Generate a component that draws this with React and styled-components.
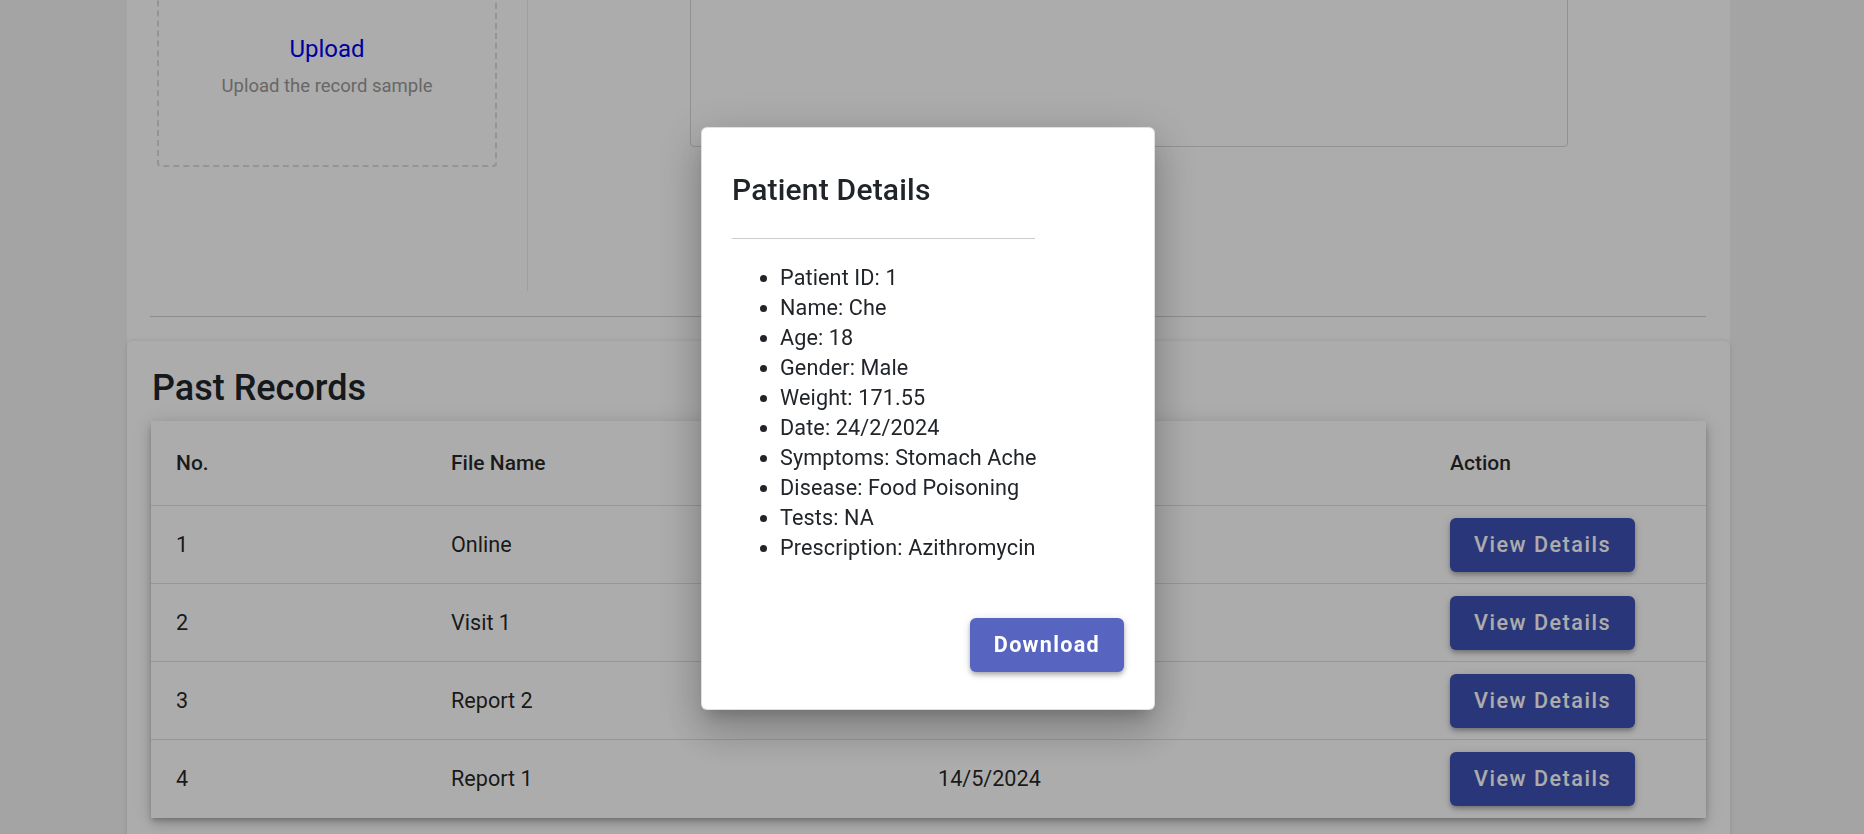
import React from "react";
import styled, { createGlobalStyle } from "styled-components";

const GlobalStyle = createGlobalStyle`
  html, body {
    margin: 0;
    padding: 0;
    background: #f3f3f3;
    font-family: Roboto, "Liberation Sans", Arial, sans-serif;
    overflow: hidden;
  }
`;

const Page = styled.div`
  margin: -73px 134px 0 127px;
  background: #ffffff;
  min-height: 980px;
`;

const UploadSection = styled.section`
  display: flex;
  height: 364px;
  padding: 20px 0 0 30px;
  box-sizing: border-box;
`;

const DropBox = styled.div`
  width: 340px;
  height: 220px;
  box-sizing: border-box;
  border: 2px dashed #d9dce1;
  border-radius: 4px;
  padding-top: 82px;
  display: flex;
  flex-direction: column;
  align-items: center;
`;

const UploadLink = styled.a`
  color: #0000ee;
  font-size: 24px;
  line-height: 36px;
  text-decoration: none;
`;

const UploadHint = styled.span`
  margin-top: 6px;
  color: #999999;
  font-size: 18.5px;
  line-height: 26px;
`;

const VDivider = styled.div`
  width: 1px;
  margin-left: 30px;
  background: #ececec;
  align-self: stretch;
`;

const PreviewArea = styled.div`
  flex: 1;
  display: flex;
  justify-content: center;
`;

const PreviewBox = styled.div`
  width: 878px;
  height: 200px;
  box-sizing: border-box;
  border: 1px solid #d8d8d8;
  border-radius: 4px;
`;

const HRule = styled.hr`
  margin: 25px 24px 0 23px;
  border: none;
  border-top: 1px solid #d2d2d2;
`;

const Card = styled.div`
  margin-top: 24px;
  background: #ffffff;
  border-radius: 6px;
  box-shadow: 0 -1px 4px rgba(0, 0, 0, 0.06), 0 2px 6px rgba(0, 0, 0, 0.08);
  padding: 26px 24px 24px 24px;
`;

const CardTitle = styled.h2`
  margin: 0 0 11px 1px;
  font-size: 36px;
  line-height: 43px;
  font-weight: 500;
  color: #212529;
`;

const TablePaper = styled.div`
  background: #ffffff;
  box-shadow: 0px 3px 5px -1px rgba(0, 0, 0, 0.2), 0px 6px 10px 0px rgba(0, 0, 0, 0.14),
    0px 1px 18px 0px rgba(0, 0, 0, 0.12);
`;

const Table = styled.table`
  width: 100%;
  border-collapse: collapse;
  table-layout: fixed;
`;

const HeadCell = styled.th`
  height: 84px;
  padding: 0 0 0 25px;
  text-align: left;
  font-size: 21px;
  font-weight: 500;
  color: rgba(0, 0, 0, 0.85);
  border-bottom: 1px solid #e0e0e0;
`;

const Row = styled.tr`
  height: 78px;
  border-bottom: ${(p) => (p.$last ? "none" : "1px solid #e0e0e0")};
`;

const Cell = styled.td`
  padding: 0 0 0 25px;
  font-size: 21.6px;
  font-weight: 400;
  color: rgba(0, 0, 0, 0.87);
`;

const Button = styled.button`
  height: 54px;
  padding: 0 24px;
  border: none;
  border-radius: 6px;
  background: ${(p) => (p.$light ? "#5865c0" : "#3f51b5")};
  color: #ffffff;
  font-family: Roboto, "Liberation Sans", Arial, sans-serif;
  font-size: 21.6px;
  font-weight: ${(p) => (p.$light ? 700 : 500)};
  letter-spacing: ${(p) => (p.$light ? "1.3px" : "1.5px")};
  cursor: pointer;
  box-shadow: 0px 2px 4px -1px rgba(0, 0, 0, 0.2), 0px 4px 5px 0px rgba(0, 0, 0, 0.14),
    0px 1px 10px 0px rgba(0, 0, 0, 0.12);
`;

const Backdrop = styled.div`
  position: fixed;
  inset: 0;
  background: rgba(0, 0, 0, 0.325);
  display: flex;
  align-items: center;
  justify-content: center;
`;

const Dialog = styled.div`
  width: 454px;
  height: 583px;
  box-sizing: border-box;
  margin: 2px 8px 0 0;
  padding: 32px 30px 37px 30px;
  background: #ffffff;
  border: 1px solid rgba(0, 0, 0, 0.12);
  border-radius: 6px;
  display: flex;
  flex-direction: column;
  box-shadow: 0px 11px 15px -7px rgba(0, 0, 0, 0.2), 0px 24px 38px 3px rgba(0, 0, 0, 0.14),
    0px 9px 46px 8px rgba(0, 0, 0, 0.12);
`;

const DialogTitle = styled.h3`
  margin: 12px 0 0 0;
  font-size: 30px;
  line-height: 36px;
  font-weight: 500;
  letter-spacing: 0.2px;
  color: #212529;
`;

const DialogRule = styled.hr`
  width: 303px;
  margin: 30px 0 0 0;
  border: none;
  border-top: 1px solid #cccccc;
`;

const DetailList = styled.ul`
  margin: 24px 0 0 0;
  padding-left: 48px;
  font-size: 21.6px;
  line-height: 30px;
  letter-spacing: 0.12px;
  color: #212529;
`;

const DialogActions = styled.div`
  margin-top: auto;
  display: flex;
  justify-content: flex-end;
`;

const records = [
  { no: 1, name: "Online", date: "24/2/2024" },
  { no: 2, name: "Visit 1", date: "2/3/2024" },
  { no: 3, name: "Report 2", date: "30/4/2024" },
  { no: 4, name: "Report 1", date: "14/5/2024" },
];

const details = [
  "Patient ID: 1",
  "Name: Che",
  "Age: 18",
  "Gender: Male",
  "Weight: 171.55",
  "Date: 24/2/2024",
  "Symptoms: Stomach Ache",
  "Disease: Food Poisoning",
  "Tests: NA",
  "Prescription: Azithromycin",
];

const App = () => {
  return (
    <>
      <GlobalStyle />
      <Page>
        <UploadSection>
          <DropBox>
            <UploadLink href="#">Upload</UploadLink>
            <UploadHint>Upload the record sample</UploadHint>
          </DropBox>
          <VDivider />
          <PreviewArea>
            <PreviewBox />
          </PreviewArea>
        </UploadSection>
        <HRule />
        <Card>
          <CardTitle>Past Records</CardTitle>
          <TablePaper>
            <Table>
              <colgroup>
                <col style={{ width: 275 }} />
                <col style={{ width: 487 }} />
                <col style={{ width: 512 }} />
                <col style={{ width: 281 }} />
              </colgroup>
              <thead>
                <tr>
                  <HeadCell>No.</HeadCell>
                  <HeadCell>File Name</HeadCell>
                  <HeadCell>Date</HeadCell>
                  <HeadCell>Action</HeadCell>
                </tr>
              </thead>
              <tbody>
                {records.map((r, i) => (
                  <Row key={r.no} $last={i === records.length - 1}>
                    <Cell>{r.no}</Cell>
                    <Cell>{r.name}</Cell>
                    <Cell>{r.date}</Cell>
                    <Cell>
                      <Button>View Details</Button>
                    </Cell>
                  </Row>
                ))}
              </tbody>
            </Table>
          </TablePaper>
        </Card>
      </Page>
      <Backdrop>
        <Dialog>
          <DialogTitle>Patient Details</DialogTitle>
          <DialogRule />
          <DetailList>
            {details.map((d) => (
              <li key={d}>{d}</li>
            ))}
          </DetailList>
          <DialogActions>
            <Button $light>Download</Button>
          </DialogActions>
        </Dialog>
      </Backdrop>
    </>
  );
};

export default App;
